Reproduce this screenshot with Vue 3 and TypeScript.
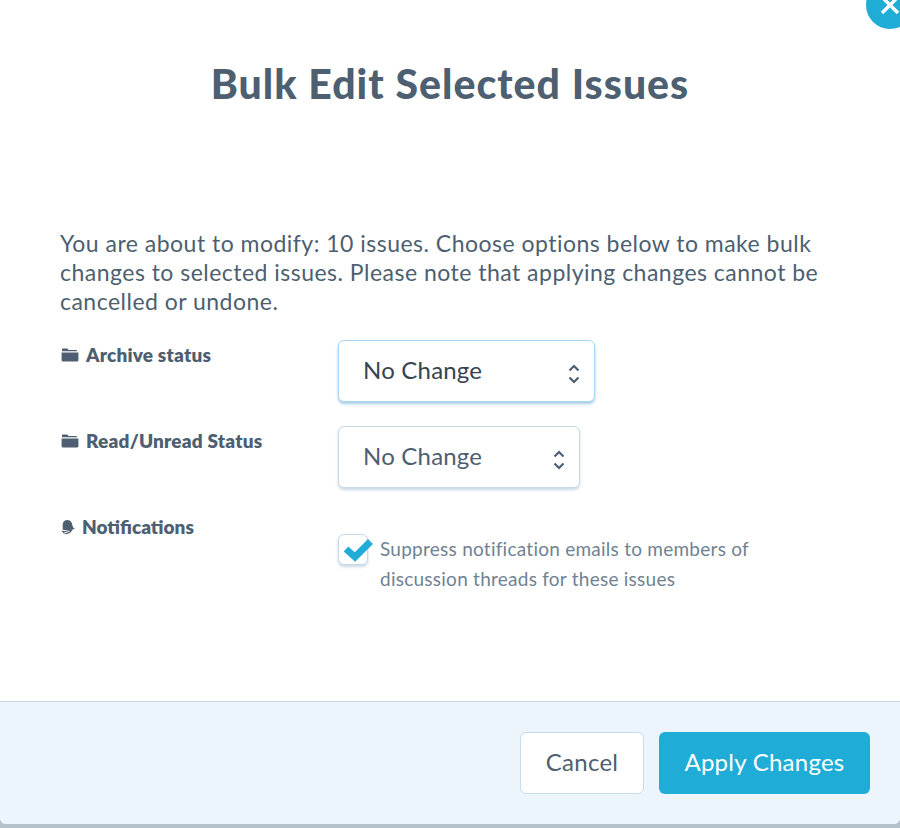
<script setup lang="ts">
import { ref } from 'vue'

const archive = ref('none')
const readStatus = ref('none')
const suppress = ref(true)
</script>

<template>
  <div class="backdrop">
    <div class="modal">
      <button type="button" class="close" aria-label="Close">
        <svg width="22" height="22" viewBox="0 0 22 22">
          <path d="M3 3 L19 19 M19 3 L3 19" stroke="#fff" stroke-width="3.4" fill="none" />
        </svg>
      </button>

      <div class="body">
        <h1 class="title">Bulk Edit Selected Issues</h1>
        <p class="intro">
          You are about to modify: 10 issues. Choose options below to make bulk changes to selected issues. Please note that applying changes cannot be cancelled or undone.
        </p>

        <div class="form">
          <label class="label">
            <svg class="icon" width="18" height="14" viewBox="0 0 18 14">
              <path d="M1 3.2V1.6C1 1 1.4.6 2 .6h4.2l1.4 1.4h7.6c.5 0 .9.4.9.9v.3H1zM.6 4.4h16.8v7.8c0 .7-.5 1.2-1.2 1.2H1.8c-.7 0-1.2-.5-1.2-1.2V4.4z" fill="#4d5f70" />
            </svg>
            Archive status
          </label>
          <div class="select-wrap focused">
            <select v-model="archive">
              <option value="none">No Change</option>
            </select>
            <svg class="chevrons" width="12" height="20" viewBox="0 0 12 20">
              <path d="M1.500 6.500 L6 2 L10.500 6.500 M1.500 13.500 L6 18 L10.500 13.500" stroke="#4d5f70" stroke-width="2.200" fill="none" />
            </svg>
          </div>

          <label class="label">
            <svg class="icon" width="18" height="14" viewBox="0 0 18 14">
              <path d="M1 3.2V1.6C1 1 1.4.6 2 .6h4.2l1.4 1.4h7.6c.5 0 .9.4.9.9v.3H1zM.6 4.4h16.8v7.8c0 .7-.5 1.2-1.2 1.2H1.8c-.7 0-1.2-.5-1.2-1.2V4.4z" fill="#4d5f70" />
            </svg>
            Read/Unread Status
          </label>
          <div class="select-wrap short">
            <select v-model="readStatus">
              <option value="none">No Change</option>
            </select>
            <svg class="chevrons" width="12" height="20" viewBox="0 0 12 20">
              <path d="M1.500 6.500 L6 2 L10.500 6.500 M1.500 13.500 L6 18 L10.500 13.500" stroke="#4d5f70" stroke-width="2.200" fill="none" />
            </svg>
          </div>

          <label class="label notif">
            <svg class="icon bell" width="15" height="16" viewBox="0 0 15 16">
              <path d="M1.500 10.500C2.200 8.500 1 5.500 2.300 3.200 3.500 1 6.500.300 8.700 1.600c2.300 1.400 2.500 4 3 5.800.3 1.100 1.200 1.700 2.300 2.100C10 11.300 5.500 12 1.500 10.500z" fill="#4d5f70" />
              <path d="M1.500 12.300c2.800.4 6.200-.2 9.300-1.500-.8 1.700-2.800 3.300-5 3.600-2 .3-3.500-.5-4.300-2.100z" fill="none" stroke="#4d5f70" stroke-width="1.100" />
            </svg>
            Notifications
          </label>
          <label class="check-row">
            <span class="check-box">
              <input v-model="suppress" type="checkbox" />
              <svg v-if="suppress" class="tick" width="32" height="28" viewBox="0 0 32 28">
                <path d="M4 13 L13 21 L28.500 5.500" stroke="#1fadd8" stroke-width="7" fill="none" />
              </svg>
            </span>
            <span class="check-text">Suppress notification emails to members of discussion threads for these issues</span>
          </label>
        </div>
      </div>

      <div class="footer">
        <button type="button" class="btn cancel">Cancel</button>
        <button type="button" class="btn apply">Apply Changes</button>
      </div>
    </div>
  </div>
</template>

<style>
body {
  background: #b4c0ca;
}
</style>

<style scoped>
.backdrop {
  height: 828px;
  overflow: hidden;
  background: #b4c0ca;
  font-family: Lato, "Liberation Sans", sans-serif;
}

.modal {
  position: relative;
  display: flex;
  flex-direction: column;
  height: 824px;
  background: #fff;
  border-radius: 0 0 6px 6px;
  overflow: hidden;
}

.close {
  position: absolute;
  top: -19px;
  right: -14px;
  display: flex;
  align-items: center;
  justify-content: center;
  width: 48px;
  height: 48px;
  padding: 0 1px 0 0;
  border: 0;
  border-radius: 50%;
  background: #1fadd8;
}

.body {
  flex: 1;
  padding: 0 60px;
}

.title {
  margin: 60px 0 0;
  font-size: 41px;
  line-height: 48px;
  font-weight: 900;
  letter-spacing: 1px;
  text-align: center;
  color: #4d5f70;
}

.intro {
  margin: 121px 0 0;
  font-size: 23px;
  line-height: 29px;
  letter-spacing: 0.48px;
  color: #4d5f70;
}

.form {
  display: grid;
  grid-template-columns: 278px 1fr;
  row-gap: 24px;
  margin-top: 24px;
}

.label {
  display: flex;
  align-items: flex-start;
  gap: 7px;
  padding-top: 4px;
  font-size: 19px;
  line-height: 22px;
  font-weight: 800;
  letter-spacing: 0.2px;
  color: #4d5f70;
}

.label .icon {
  margin-top: 4px;
  margin-left: 1px;
}

.label.notif {
  gap: 6px;
  letter-spacing: 0;
}

.label .bell {
  margin-top: 3px;
}

.select-wrap {
  position: relative;
  width: 257px;
  height: 62px;
}

.select-wrap.short {
  width: 242px;
}

.select-wrap select {
  appearance: none;
  box-sizing: border-box;
  width: 100%;
  height: 100%;
  padding: 0 24px 4px;
  border: 1px solid #c5d9e8;
  border-radius: 6px;
  background: #fff;
  box-shadow: 0 2px 3px rgba(77, 130, 170, 0.3);
  font-family: inherit;
  font-size: 24px;
  letter-spacing: 0.2px;
  color: #4d5f70;
}

.select-wrap.focused select {
  border-color: #a9d5ee;
  box-shadow: 0 2px 3px rgba(60, 140, 190, 0.45);
  color: #36444f;
}

.chevrons {
  position: absolute;
  top: 24px;
  right: 15px;
}

.check-row {
  display: flex;
  gap: 12px;
  margin-top: 22px;
}

.check-box {
  position: relative;
  flex: none;
  width: 30px;
  height: 31px;
  border: 1px solid #c5d9e8;
  border-radius: 6px;
  box-sizing: border-box;
  background: #fff;
  box-shadow: 0 2px 3px rgba(77, 130, 170, 0.3);
}

.check-box input {
  position: absolute;
  inset: 0;
  margin: 0;
  opacity: 0;
}

.tick {
  position: absolute;
  top: 1px;
  left: 3px;
}

.check-text {
  width: 400px;
  font-size: 19px;
  line-height: 30px;
  letter-spacing: 0.25px;
  color: #6f8294;
}

.footer {
  display: flex;
  justify-content: flex-end;
  gap: 15px;
  padding: 30px;
  height: 123px;
  box-sizing: border-box;
  background: #ecf4fc;
  border-top: 1px solid #c6d6e4;
}

.btn {
  height: 62px;
  padding: 0 0 3px;
  border-radius: 6px;
  font-family: inherit;
  font-size: 24px;
  letter-spacing: 0.25px;
}

.cancel {
  width: 124px;
  border: 1px solid #c9dcea;
  background: #fff;
  color: #4d5f70;
}

.apply {
  width: 211px;
  border: 0;
  background: #1fadd8;
  color: #fff;
}
</style>
